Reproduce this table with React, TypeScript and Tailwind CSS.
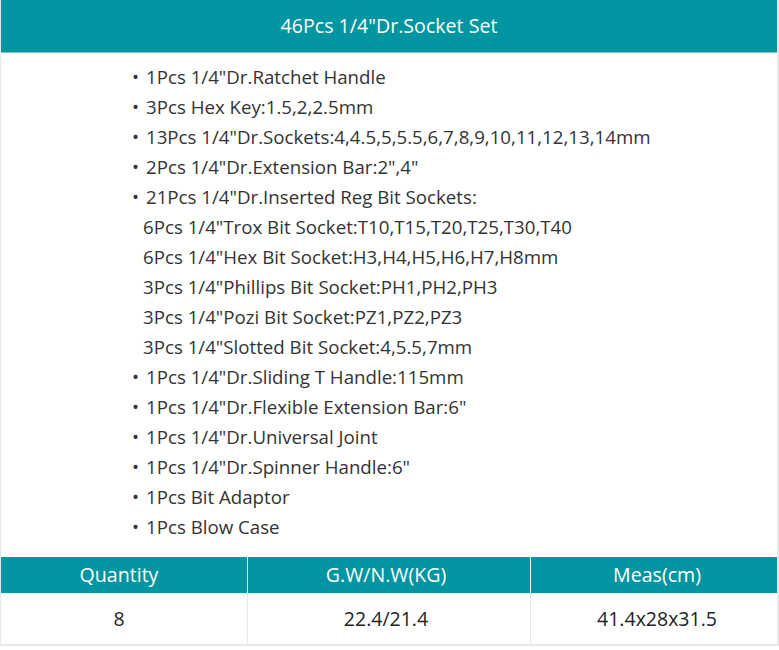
import React from "react";

const items: { text: string; bullet: boolean }[] = [
  { text: '1Pcs 1/4"Dr.Ratchet Handle', bullet: true },
  { text: "3Pcs Hex Key:1.5,2,2.5mm", bullet: true },
  { text: '13Pcs 1/4"Dr.Sockets:4,4.5,5,5.5,6,7,8,9,10,11,12,13,14mm', bullet: true },
  { text: '2Pcs 1/4"Dr.Extension Bar:2",4"', bullet: true },
  { text: '21Pcs 1/4"Dr.Inserted Reg Bit Sockets:', bullet: true },
  { text: '6Pcs 1/4"Trox Bit Socket:T10,T15,T20,T25,T30,T40', bullet: false },
  { text: '6Pcs 1/4"Hex Bit Socket:H3,H4,H5,H6,H7,H8mm', bullet: false },
  { text: '3Pcs 1/4"Phillips Bit Socket:PH1,PH2,PH3', bullet: false },
  { text: '3Pcs 1/4"Pozi Bit Socket:PZ1,PZ2,PZ3', bullet: false },
  { text: '3Pcs 1/4"Slotted Bit Socket:4,5.5,7mm', bullet: false },
  { text: '1Pcs 1/4"Dr.Sliding T Handle:115mm', bullet: true },
  { text: '1Pcs 1/4"Dr.Flexible Extension Bar:6"', bullet: true },
  { text: '1Pcs 1/4"Dr.Universal Joint', bullet: true },
  { text: '1Pcs 1/4"Dr.Spinner Handle:6"', bullet: true },
  { text: "1Pcs Bit Adaptor", bullet: true },
  { text: "1Pcs Blow Case", bullet: true },
];

export default function App() {
  return (
    <div
      className="w-[779px] bg-white text-[#333333]"
      style={{ fontFamily: '"Open Sans", sans-serif' }}
    >
      <div className="border-x-2 border-[#e8e8e8] border-l-[1px]">
        <div className="h-[53px] bg-[#0095a1] border-b border-[#7cc8ce] flex items-center justify-center text-white text-[19.6px]">
          46Pcs 1/4"Dr.Socket Set
        </div>
        <div className="pt-[9px] pb-[15px] pl-[131px] text-[18.7px] leading-[30px]">
          {items.map((it, i) => (
            <div key={i} className="flex whitespace-nowrap">
              {it.bullet ? (
                <span className="w-[14px]">•</span>
              ) : (
                <span className="w-[11px]" />
              )}
              <span>{it.text}</span>
            </div>
          ))}
        </div>
        <div className="grid grid-cols-[246px_1px_282px_1px_1fr] border-b-2 border-[#e8e8e8]">
          <div className="h-[36px] pr-[10px] bg-[#0095a1] text-white text-[19.6px] flex items-center justify-center">Quantity</div>
          <div className="bg-white" />
          <div className="h-[36px] pr-[6px] bg-[#0095a1] text-white text-[19.6px] flex items-center justify-center">G.W/N.W(KG)</div>
          <div className="bg-white" />
          <div className="h-[36px] pl-[6px] bg-[#0095a1] text-white text-[19.6px] flex items-center justify-center">Meas(cm)</div>
          <div className="h-[51px] pr-[10px] flex items-center justify-center text-[19.5px] text-[#222222]">8</div>
          <div className="bg-[#e8e8e8]" />
          <div className="h-[51px] pr-[6px] flex items-center justify-center text-[19.5px] text-[#222222]">22.4/21.4</div>
          <div className="bg-[#e8e8e8]" />
          <div className="h-[51px] pl-[6px] flex items-center justify-center text-[19.5px] text-[#222222]">41.4x28x31.5</div>
        </div>
      </div>
    </div>
  );
}
